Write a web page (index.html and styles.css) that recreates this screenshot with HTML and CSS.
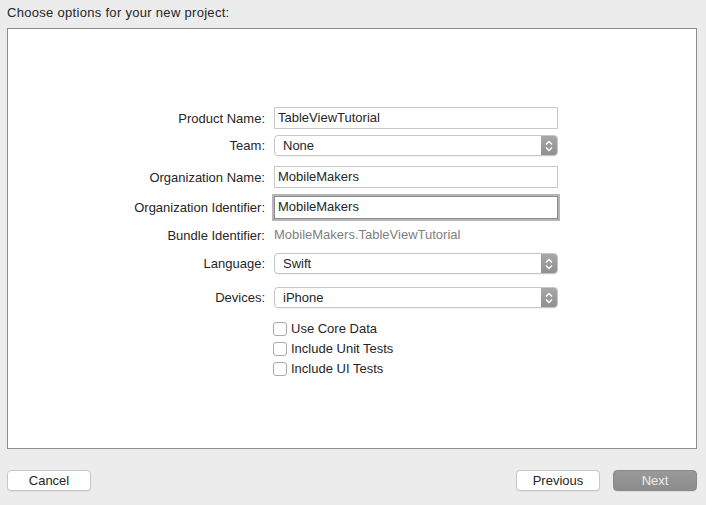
FILE: index.html
```html
<!DOCTYPE html>
<html>
<head>
<meta charset="utf-8">
<link rel="stylesheet" href="styles.css">
</head>
<body>
<div class="window">
  <div class="title">Choose options for your new project:</div>
  <div class="panel">
    <div class="form">
      <div class="row r-product">
        <div class="label">Product Name:</div>
        <div class="field text">TableViewTutorial</div>
      </div>
      <div class="row r-team">
        <div class="label">Team:</div>
        <div class="field popup"><span class="ptext">None</span><span class="stepper"><svg width="8" height="12" viewBox="0 0 8 12"><path d="M1 4.5 L4 1.5 L7 4.5 M1 7.5 L4 10.5 L7 7.5" fill="none" stroke="#fff" stroke-width="1.3"/></svg></span></div>
      </div>
      <div class="row r-orgname">
        <div class="label">Organization Name:</div>
        <div class="field text">MobileMakers</div>
      </div>
      <div class="row r-orgid">
        <div class="label">Organization Identifier:</div>
        <div class="field text focused">MobileMakers</div>
      </div>
      <div class="row r-bundle">
        <div class="label">Bundle Identifier:</div>
        <div class="field plain">MobileMakers.TableViewTutorial</div>
      </div>
      <div class="row r-lang">
        <div class="label">Language:</div>
        <div class="field popup"><span class="ptext">Swift</span><span class="stepper"><svg width="8" height="12" viewBox="0 0 8 12"><path d="M1 4.5 L4 1.5 L7 4.5 M1 7.5 L4 10.5 L7 7.5" fill="none" stroke="#fff" stroke-width="1.3"/></svg></span></div>
      </div>
      <div class="row r-dev">
        <div class="label">Devices:</div>
        <div class="field popup"><span class="ptext">iPhone</span><span class="stepper"><svg width="8" height="12" viewBox="0 0 8 12"><path d="M1 4.5 L4 1.5 L7 4.5 M1 7.5 L4 10.5 L7 7.5" fill="none" stroke="#fff" stroke-width="1.3"/></svg></span></div>
      </div>
      <div class="checks">
        <div class="check"><span class="box"></span><span class="ctext">Use Core Data</span></div>
        <div class="check"><span class="box"></span><span class="ctext">Include Unit Tests</span></div>
        <div class="check"><span class="box"></span><span class="ctext">Include UI Tests</span></div>
      </div>
    </div>
  </div>
  <div class="footer">
    <div class="btn">Cancel</div>
    <div class="right">
      <div class="btn">Previous</div>
      <div class="btn primary">Next</div>
    </div>
  </div>
</div>
</body>
</html>
```
FILE: styles.css
```css
* { box-sizing: border-box; }
html, body {
  margin: 0;
  padding: 0;
  background: #ececec;
  font-family: "Liberation Sans", Arial, sans-serif;
  font-size: 13px;
  color: #262626;
}
.window {
  width: 706px;
  height: 505px;
  padding: 0 9px 0 7px;
}
.title {
  height: 28px;
  line-height: 26px;
  letter-spacing: 0.3px;
}
.panel {
  height: 421px;
  background: #fff;
  border: 1px solid #8e8e8e;
}
.form {
  padding-top: 78px;
}
.row {
  display: flex;
  align-items: center;
}
.label {
  width: 257px;
  text-align: right;
  flex: none;
}
.field {
  margin-left: 9px;
  width: 284px;
  flex: none;
}
.text {
  height: 22px;
  border: 1px solid #c9c9c9;
  padding: 0 0 0 3px;
  line-height: 20px;
}
.r-product { height: 22px; }
.r-team { height: 21px; margin-top: 6px; }
.r-orgname { height: 22px; margin-top: 10px; }
.r-orgid { height: 23px; margin-top: 8px; }
.r-bundle { height: 18px; margin-top: 7px; }
.r-lang { height: 21px; margin-top: 9px; }
.r-dev { height: 21px; margin-top: 13px; }
.focused {
  height: 23px;
  border: 1px solid #8a8a8a;
  box-shadow: 0 0 0 2px #b6b6b6;
}
.plain {
  color: #808080;
  line-height: 18px;
}
.popup {
  height: 21px;
  border: 1px solid #c6c6c6;
  border-radius: 4px;
  display: flex;
  align-items: center;
  justify-content: space-between;
  overflow: hidden;
  box-shadow: 0 1px 0 rgba(0,0,0,0.05);
}
.ptext {
  padding-left: 8px;
}
.stepper {
  width: 16px;
  height: 100%;
  background: linear-gradient(#a8a8a8, #8f8f8f);
  display: flex;
  align-items: center;
  justify-content: center;
}
.checks {
  margin-top: 11px;
  padding-left: 265px;
}
.check {
  height: 20px;
  display: flex;
  align-items: center;
}
.ctext {
  position: relative;
  top: -1px;
}
.box {
  width: 14px;
  height: 14px;
  border: 1px solid #a9a9a9;
  border-radius: 3px;
  background: #fff;
  margin-right: 4px;
}
.footer {
  display: flex;
  justify-content: space-between;
  padding-top: 21px;
}
.right {
  display: flex;
  gap: 13px;
}
.btn {
  width: 84px;
  height: 21px;
  background: #fff;
  border: 1px solid #c7c7c7;
  border-radius: 4px;
  text-align: center;
  line-height: 19px;
  box-shadow: 0 1px 0 rgba(0,0,0,0.06);
}
.primary {
  background: linear-gradient(#9a9a9a, #8c8c8c);
  border-color: #8a8a8a;
  color: #ededed;
}
```
